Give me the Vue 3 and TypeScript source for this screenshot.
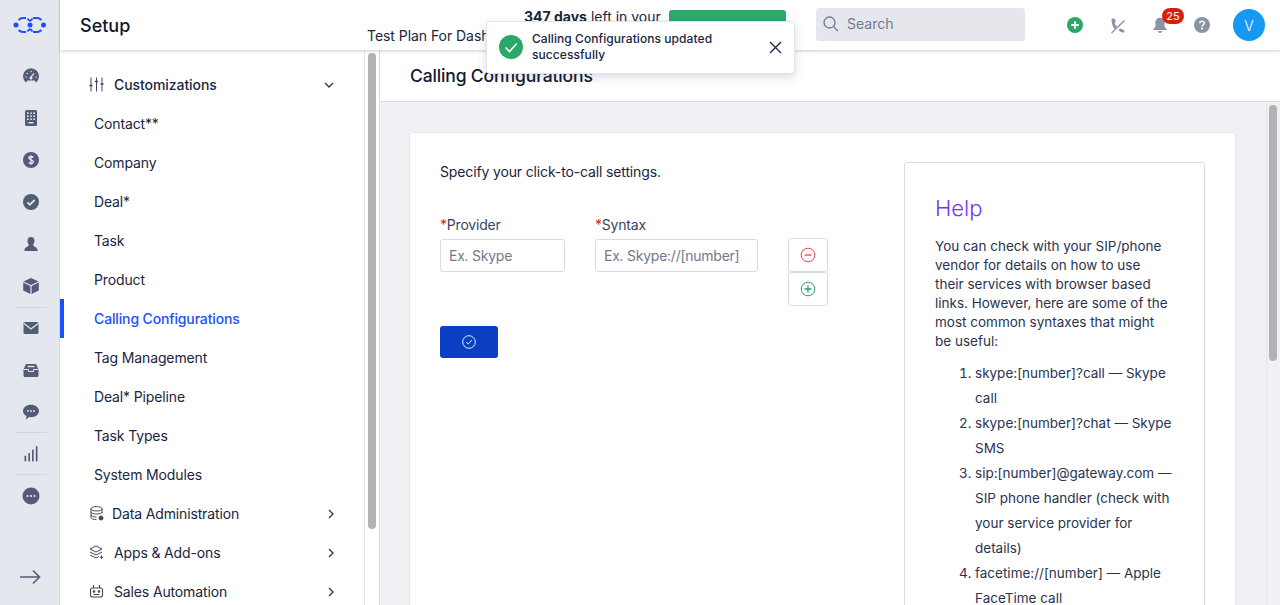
<script setup lang="ts">
const subItems: { label: string; active?: boolean }[] = [
  { label: 'Contact**' },
  { label: 'Company' },
  { label: 'Deal*' },
  { label: 'Task' },
  { label: 'Product' },
  { label: 'Calling Configurations', active: true },
  { label: 'Tag Management' },
  { label: 'Deal* Pipeline' },
  { label: 'Task Types' },
  { label: 'System Modules' },
]
const helpList: string[] = [
  'skype:[number]?call — Skype call',
  'skype:[number]?chat — Skype SMS',
  'sip:[number]@gateway.com — SIP phone handler (check with your service provider for details)',
  'facetime://[number] — Apple FaceTime call',
]
</script>

<template>
  <div class="app">
    <nav class="rail">
      <svg class="logo" width="34" height="16" viewBox="0 0 34 16" fill="none">
        <path d="M5.500 3Q7.500 1 10 1H13M20 1H24Q26.500 1 28.500 3M14.500 1.500Q16 3.800 17 3.800T19.500 1.500M5.500 13Q7.500 15 10 15H13M20 15H24Q26.500 15 28.500 13M14.500 14.500Q16 12.200 17 12.200T19.500 14.500" stroke="#1a4fff" stroke-width="1.900" />
        <circle cx="3" cy="8" r="2.500" fill="#1a4fff" />
        <circle cx="17" cy="8" r="2.500" fill="#1a4fff" />
        <circle cx="30.500" cy="8" r="2.500" fill="#1a4fff" />
      </svg>
      <div class="rail-list">
        <span class="ri"><svg width="18" height="18" viewBox="0 0 18 18"><path d="M4 15.500A8 8 0 1 1 14 15.500L12.500 13.500H5.500Z" fill="#525c76" /><path d="M8.600 10.600 12 6.400" stroke="#e5e7ee" stroke-width="1.300" /><circle cx="9" cy="11" r="1.500" fill="#e5e7ee" /><g fill="#e5e7ee"><circle cx="4" cy="10" r=".7" /><circle cx="5.200" cy="6.500" r=".7" /><circle cx="9" cy="4.500" r=".7" /><circle cx="14" cy="10" r=".7" /></g></svg></span>
        <span class="ri"><svg width="18" height="18" viewBox="0 0 18 18"><rect x="3" y="1" width="12" height="16" rx="1.500" fill="#525c76" /><g fill="#e5e7ee"><rect x="5" y="3.400" width="1.600" height="1.600" /><rect x="8.200" y="3.400" width="1.600" height="1.600" /><rect x="11.400" y="3.400" width="1.600" height="1.600" /><rect x="5" y="6.400" width="1.600" height="1.600" /><rect x="8.200" y="6.400" width="1.600" height="1.600" /><rect x="11.400" y="6.400" width="1.600" height="1.600" /><rect x="5" y="9.400" width="1.600" height="1.600" /><rect x="8.200" y="9.400" width="1.600" height="1.600" /><rect x="11.400" y="9.400" width="1.600" height="1.600" /><rect x="6.500" y="13" width="5" height="1.400" /></g></svg></span>
        <span class="ri"><svg width="18" height="18" viewBox="0 0 18 18"><circle cx="9" cy="9" r="8" fill="#525c76" /><path d="M11.200 6.600C10.800 5.800 10 5.500 9 5.500 7.800 5.500 6.900 6.100 6.900 7.100 6.900 9.300 11.300 8.400 11.300 10.800 11.300 11.900 10.300 12.500 9 12.500 7.900 12.500 7 12.100 6.700 11.200M9 4.200V13.800" stroke="#e5e7ee" stroke-width="1.300" fill="none" /></svg></span>
        <span class="ri"><svg width="18" height="18" viewBox="0 0 18 18"><circle cx="9" cy="9" r="8" fill="#525c76" /><path d="M5.300 9.300 7.900 11.700 12.700 6.800" stroke="#e5e7ee" stroke-width="1.700" fill="none" /></svg></span>
        <span class="ri"><svg width="18" height="18" viewBox="0 0 18 18"><path d="M9 2C11.300 2 12.500 3.700 12.500 5.800 12.500 7.600 11.800 9 11 10 11.200 11.500 15.500 12 15.500 15V16H2.500V15C2.500 12 6.800 11.500 7 10 6.200 9 5.500 7.600 5.500 5.800 5.500 3.700 6.700 2 9 2Z" fill="#525c76" /></svg></span>
        <span class="ri"><svg width="18" height="18" viewBox="0 0 18 18"><path d="M9 1 16.500 4.500 9 8 1.500 4.500Z" fill="#525c76" /><path d="M1.200 5.600 8.400 9V17L1.200 13.600ZM16.800 5.600 9.600 9V17L16.800 13.600Z" fill="#525c76" /></svg></span>
        <hr class="rule rule-a" />
        <span class="ri"><svg width="18" height="18" viewBox="0 0 18 18"><rect x="1.500" y="3" width="15" height="12" rx="1.500" fill="#525c76" /><path d="M2 4.500 9 10 16 4.500" stroke="#e5e7ee" stroke-width="1.200" fill="none" /></svg></span>
        <span class="ri"><svg width="18" height="18" viewBox="0 0 18 18"><path d="M4 3H14L16.500 8.500V14.500A1.500 1.500 0 0 1 15 16H3A1.500 1.500 0 0 1 1.500 14.500V8.500Z" fill="#525c76" /><path d="M2 8.500H6.500V10.500H11.500V8.500H16" stroke="#e5e7ee" stroke-width="1" fill="none" /><path d="M5.500 5.500H12.500" stroke="#e5e7ee" stroke-width="1.400" /></svg></span>
        <span class="ri"><svg width="18" height="18" viewBox="0 0 18 18"><path d="M9 1.800C4.600 1.800 1 4.500 1 8 1 10.200 2.400 12 4.600 13.100L3.600 16.500 7.400 14.100C7.900 14.200 8.500 14.200 9 14.200 13.400 14.200 17 11.500 17 8S13.400 1.800 9 1.800Z" fill="#525c76" /><g fill="#e5e7ee"><circle cx="6" cy="8" r=".9" /><circle cx="9" cy="8" r=".9" /><circle cx="12" cy="8" r=".9" /></g></svg></span>
        <hr class="rule rule-b" />
        <span class="ri"><svg width="18" height="18" viewBox="0 0 18 18" fill="#525c76"><rect x="2.500" y="10.500" width="1.700" height="6" rx=".8" /><rect x="6.300" y="8" width="1.700" height="8.500" rx=".8" /><rect x="10" y="4.500" width="1.700" height="12" rx=".8" /><rect x="13.800" y="1" width="1.700" height="15.500" rx=".8" /></svg></span>
        <hr class="rule rule-b" />
        <span class="ri"><svg width="18" height="18" viewBox="0 0 18 18"><circle cx="9" cy="9" r="8.500" fill="#525c76" /><g fill="#e5e7ee"><circle cx="5.500" cy="9" r="1.100" /><circle cx="9" cy="9" r="1.100" /><circle cx="12.500" cy="9" r="1.100" /></g></svg></span>
      </div>
      <svg class="expand" width="22" height="16" viewBox="0 0 22 16" fill="none"><path d="M1 8H20M14 1.500 20.500 8 14 14.500" stroke="#525c76" stroke-width="1.600" /></svg>
    </nav>

    <div class="shell">
      <header class="top">
        <h1 class="setup">Setup</h1>
        <div class="plan">
          <div class="plan-line">
            <span class="plan-days"><b>347 days</b> left in your</span>
            <span class="plan-btn"></span>
          </div>
          <div class="plan-name">Test Plan For Dash</div>
        </div>
        <div class="search">
          <svg width="16" height="16" viewBox="0 0 16 16" fill="none"><circle cx="6.500" cy="6.500" r="5.500" stroke="#6f7a90" stroke-width="1.300" /><path d="M10.500 10.500 15 15" stroke="#6f7a90" stroke-width="1.300" /></svg>
          <span>Search</span>
        </div>
        <div class="actions">
          <svg class="act-add" width="16" height="16" viewBox="0 0 16 16"><circle cx="8" cy="8" r="8" fill="#2aa866" /><path d="M8 4.200V11.800M4.200 8H11.800" stroke="#fff" stroke-width="1.800" /></svg>
          <svg class="act-phone" width="17" height="17" viewBox="0 0 17 17"><path d="M1.500 2.300 4 1 6 4.400 4.600 6.100C5 7.500 6 8.800 7 9.700L4.500 12C2.700 9.800 1.500 6 1.500 2.300Z" fill="#8b93a7" /><path d="M8.500 12.800 10.300 11.500 14.600 13.500 14 15.300C12.200 16.200 10 15 8.500 12.800Z" fill="#8b93a7" /><path d="M1.500 16 14.500 3.500" stroke="#8b93a7" stroke-width="1.400" /></svg>
          <span class="bell">
            <svg width="16" height="16" viewBox="0 0 16 16"><path d="M8 .8C5.200 .8 3.400 3 3.400 5.800V9.500L1 13H15L12.600 9.500V5.800C12.600 3 10.800 .8 8 .8Z" fill="#8b93a7" /><path d="M6 14A2 2 0 0 0 10 14Z" fill="#8b93a7" /></svg>
            <span class="badge">25</span>
          </span>
          <svg class="act-help" width="16" height="16" viewBox="0 0 16 16"><circle cx="8" cy="8" r="8" fill="#8b93a7" /><path d="M5.700 6.200C5.800 4.900 6.800 4.200 8 4.200 9.300 4.200 10.300 5 10.300 6.100 10.300 7.600 8.100 7.600 8.100 9.400" stroke="#fff" stroke-width="1.500" fill="none" /><circle cx="8.100" cy="11.500" r="1" fill="#fff" /></svg>
          <span class="avatar">V</span>
        </div>
      </header>

      <div class="body">
        <aside class="side">
          <div class="side-scroll">
            <div class="row head">
              <svg class="row-ic" width="15" height="15" viewBox="0 0 15 15" fill="none" stroke="#3d4760" stroke-width="1"><path d="M2 .5V14.500M7.500 .5V14.500M13 .5V14.500" /><path d="M.5 8.500H3.500M6 4.500H9M11.500 7H14.500" stroke-width="1.400" /></svg>
              <span class="head-label">Customizations</span>
              <svg class="chev" width="10" height="6" viewBox="0 0 10 6" fill="none"><path d="M1 1 5 5 9 1" stroke="#2a3450" stroke-width="1.300" /></svg>
            </div>
            <div v-for="item in subItems" :key="item.label" class="row sub" :class="{ active: item.active }">{{ item.label }}</div>
            <div class="row group">
              <svg class="row-ic ic-data" width="14" height="15" viewBox="0 0 14 15" fill="none" stroke="#3d4760" stroke-width="1"><ellipse cx="6.500" cy="2.800" rx="5.500" ry="2.200" /><path d="M1 2.800V11.500C1 12.700 3.500 13.500 6.500 13.500M12 2.800V7M1 6C1 7.200 3.500 8 6.500 8S12 7.200 12 6M1 9C1 10 3.500 11 6.500 11" /><circle cx="11" cy="12" r="2" fill="#3d4760" /></svg>
              <span class="g1">Data Administration</span>
              <svg class="chev2" width="6" height="10" viewBox="0 0 6 10" fill="none"><path d="M1 1 5 5 1 9" stroke="#2a3450" stroke-width="1.300" /></svg>
            </div>
            <div class="row group">
              <svg class="row-ic" width="15" height="15" viewBox="0 0 15 15" fill="none" stroke="#3d4760" stroke-width="1"><path d="M7 1 13 4 7 7 1 4ZM1 7 7 10 13 7M1 10 7 13 10 11.500" /><path d="M12.500 10.500V14M10.800 12.300H14.300" /></svg>
              <span class="g2">Apps &amp; Add-ons</span>
              <svg class="chev2" width="6" height="10" viewBox="0 0 6 10" fill="none"><path d="M1 1 5 5 1 9" stroke="#2a3450" stroke-width="1.300" /></svg>
            </div>
            <div class="row group">
              <svg class="row-ic" width="15" height="15" viewBox="0 0 15 15" fill="none" stroke="#3d4760" stroke-width="1.100"><rect x="1.500" y="4" width="12" height="9" rx="2" /><path d="M4.500 1V4M10.500 1V4M4.500 10.500H10.500" /><circle cx="5" cy="7.500" r=".8" fill="#3d4760" /><circle cx="10" cy="7.500" r=".8" fill="#3d4760" /></svg>
              <span class="g2">Sales Automation</span>
              <svg class="chev2" width="6" height="10" viewBox="0 0 6 10" fill="none"><path d="M1 1 5 5 1 9" stroke="#2a3450" stroke-width="1.300" /></svg>
            </div>
          </div>
          <div class="track"><span class="thumb side-thumb"></span></div>
        </aside>

        <main class="main">
          <div class="title-bar">Calling Configurations</div>
          <div class="content">
            <div class="content-scroll">
              <section class="card">
                <div class="form">
                  <p class="intro">Specify your click-to-call settings.</p>
                  <div class="fields">
                    <label class="field f-provider">
                      <span class="lab"><i>*</i>Provider</span>
                      <span class="input">Ex. Skype</span>
                    </label>
                    <label class="field f-syntax">
                      <span class="lab"><i>*</i>Syntax</span>
                      <span class="input">Ex. Skype://[number]</span>
                    </label>
                    <div class="row-btns">
                      <span class="mini"><svg width="16" height="16" viewBox="0 0 16 16" fill="none" stroke="#e9424f" stroke-width="1"><circle cx="8" cy="8" r="6.800" /><path d="M4.500 8H11.500" stroke-width="1.300" /></svg></span>
                      <span class="mini"><svg width="16" height="16" viewBox="0 0 16 16" fill="none" stroke="#2b9a66" stroke-width="1"><circle cx="8" cy="8" r="6.800" /><path d="M4.500 8H11.500M8 4.500V11.500" stroke-width="1.300" /></svg></span>
                    </div>
                  </div>
                  <div class="submit"><svg width="14" height="14" viewBox="0 0 14 14" fill="none" stroke="#fff" stroke-width=".9"><circle cx="7" cy="7" r="6.300" /><path d="M4.200 7.200 6.200 9 9.800 5.200" /></svg></div>
                </div>
                <aside class="help">
                  <h2>Help</h2>
                  <p>You can check with your SIP/phone vendor for details on how to use their services with browser based links. However, here are some of the most common syntaxes that might be useful:</p>
                  <ol>
                    <li v-for="h in helpList" :key="h">{{ h }}</li>
                  </ol>
                </aside>
              </section>
            </div>
            <div class="track main-track"><span class="thumb main-thumb"></span></div>
          </div>
        </main>
      </div>
    </div>

    <div class="toast">
      <svg width="24" height="24" viewBox="0 0 24 24"><circle cx="12" cy="12" r="12" fill="#2aa866" /><path d="M6.500 12.500 10.500 16.500 17.800 8.500" stroke="#fff" stroke-width="1.600" fill="none" /></svg>
      <span class="toast-text">Calling Configurations updated successfully</span>
      <svg class="toast-x" width="13" height="13" viewBox="0 0 13 13" fill="none"><path d="M1 1 12 12M12 1 1 12" stroke="#1b2540" stroke-width="1.300" /></svg>
    </div>
  </div>
</template>

<style>
html, body { margin: 0; height: 100%; overflow: hidden; }
</style>

<style scoped>
* { box-sizing: border-box; }
.app {
  position: relative; display: flex; width: 1280px; height: 605px; overflow: hidden;
  font-family: Inter, "Liberation Sans", sans-serif; font-size: 14px; color: #1b2540; background: #fff;
}
.rail {
  width: 60px; flex: none; display: flex; flex-direction: column; align-items: center;
  background: #e5e7ee; border-right: 1px solid #d5d8e2; padding-top: 17px; position: relative;
}
.rail-list { display: flex; flex-direction: column; align-items: center; margin-top: 22px; margin-left: 2px; width: 32px; }
.ri { height: 42px; display: flex; align-items: center; justify-content: center; flex: none; width: 100%; }
.rule { width: 32px; height: 1px; margin: 0; border: 0; background: #d0d6e4; flex: none; }
.rule-a { margin-bottom: -1px; }
.rule-b { margin-top: -1px; }
.expand { margin-top: auto; margin-bottom: 20px; }

.shell { flex: 1; min-width: 0; display: flex; flex-direction: column; }
.top {
  height: 50px; flex: none; display: flex; align-items: flex-start; background: #fff; position: relative; z-index: 2;
  box-shadow: 0 1px 3px rgba(60, 70, 110, .28); padding-left: 20px;
}
.setup { margin: 0; font-size: 18px; line-height: 52px; font-weight: 500; color: #12192f; width: 287px; flex: none; }
.plan { width: 449px; flex: none; height: 50px; overflow: hidden; }
.plan-line { display: flex; height: 26px; padding-left: 157px; gap: 8px; padding-top: 10px; line-height: 14px; }
.plan-days { white-space: nowrap; }
.plan-btn { width: 117px; height: 30px; border-radius: 3px; background: #2fa86b; flex: none; }
.plan-name { line-height: 20px; letter-spacing: -0.05px; }
.search {
  width: 209px; height: 33px; margin-top: 8px; border-radius: 3px; background: #e5e7ec; flex: none;
  display: flex; align-items: center; gap: 8px; padding: 0 0 2px 7px; color: #6f7a90;
}
.actions { position: relative; flex: 1; height: 50px; display: flex; align-items: center; padding-left: 42px; }
.act-phone { margin-left: 27px; }
.bell { position: relative; margin-left: 25px; display: block; height: 16px; }
.bell svg { display: block; }
.badge {
  position: absolute; left: 10px; top: -9px; width: 22px; height: 16px; border-radius: 8px; background: #d5210f;
  color: #fff; font-size: 11px; line-height: 16px; text-align: center;
}
.act-help { margin-left: 26px; }
.avatar {
  width: 32px; height: 32px; border-radius: 50%; background: #1699f3; color: #fff; margin-left: 23px;
  display: flex; align-items: center; justify-content: center; font-size: 14px; font-weight: 300;
}

.body { flex: 1; min-height: 0; display: flex; }
.side { width: 320px; flex: none; display: flex; border-right: 1px solid #d9dbe3; overflow: hidden; }
.side-scroll { flex: 1; padding-top: 14.500px; min-width: 0; border-right: 1px solid #e8e9ee; letter-spacing: -0.14px; }
.row { height: 39px; display: flex; align-items: center; white-space: nowrap; position: relative; }
.sub { padding-left: 34px; }
.sub.active { color: #1a4fff; font-weight: 500; }
.sub.active::before { content: ""; position: absolute; left: 0; top: 0; bottom: 0; width: 4px; background: #1a4fff; }
.row-ic { position: absolute; left: 29px; top: 12px; }
.ic-data { left: 30px; }
.head-label { margin-left: 54px; font-weight: 500; letter-spacing: -0.07px; }
.chev { position: absolute; left: 264px; top: 17px; }
.g1 { margin-left: 52px; }
.g2 { margin-left: 54px; }
.chev2 { position: absolute; left: 268px; top: 15px; }
.track { width: 14px; flex: none; padding: 3px 3px 0; background: #fff; }
.thumb { display: block; width: 8px; border-radius: 4px; background: #b2b2b2; }
.side-thumb { height: 476px; }

.main { flex: 1; min-width: 0; display: flex; flex-direction: column; }
.title-bar {
  height: 52px; flex: none; padding: 16px 0 0 30px; font-size: 17.500px; font-weight: 500; line-height: 20px; letter-spacing: -0.15px;
  color: #12192f; background: #fff; border-bottom: 1px solid #d9dbe3;
}
.content { flex: 1; min-height: 0; display: flex; background: #f0f1f5; }
.content-scroll { flex: 1; min-width: 0; padding: 30px 30px 0 29px; overflow: hidden; }
.main-track { background: #f0f1f5; border-left: 1px solid #e6e7ec; padding-top: 3px; padding-left: 2px; }
.main-thumb { height: 256px; }
.card {
  display: flex; height: 700px; background: #fff; border: 1px solid #e6e7ec; border-radius: 4px;
  padding: 29px 30px 0 30px;
}
.form { width: 464px; flex: none; }
.intro { margin: 0; line-height: 20px; letter-spacing: -0.14px; }
.fields { display: flex; margin-top: 34px; }
.field { display: flex; flex-direction: column; }
.f-provider { width: 125px; margin-right: 30px; }
.f-syntax { width: 163px; margin-right: 30px; }
.lab { line-height: 20px; margin-bottom: 4px; margin-top: -1px; color: #3a4560; letter-spacing: -0.2px; }
.lab i { font-style: normal; color: #d5210f; }
.input {
  height: 33px; border: 1px solid #d9dbe3; border-radius: 3px; padding-left: 8px; line-height: 31px; color: #6f7a90; white-space: nowrap; letter-spacing: -0.25px;
}
.row-btns { display: flex; flex-direction: column; margin-top: 22px; }
.mini {
  width: 40px; height: 34px; border: 1px solid #d9dbe3; border-radius: 3px; display: flex; align-items: center; justify-content: center; background: #fff;
}
.submit {
  width: 58px; height: 32px; margin-top: 20px; border-radius: 3px; background: #0a3fc4; display: flex; align-items: center; justify-content: center;
}
.help {
  width: 301px; flex: none; height: 600px; border: 1px solid #d9dbe3; border-radius: 3px; padding: 30px; color: #2a3450; font-size: 13.500px;
}
.help h2 { margin: 0 0 14px; font-size: 22px; line-height: 30px; font-weight: 300; color: #6f36f5; }
.help p { margin: 0; line-height: 19px; padding-right: 5px; }
.help ol { margin: 10px 0 0; padding: 0 0 0 40px; }
.help li { line-height: 25px; }

.toast {
  position: absolute; left: 485.500px; top: 20.500px; width: 309px; height: 53px; z-index: 5; background: #fff;
  border: 1px solid #e3e5ec; border-radius: 4px; box-shadow: 0 3px 10px rgba(40, 50, 90, .18);
  display: flex; align-items: center; padding-left: 12.500px;
}
.toast svg { flex: none; }
.toast-text { width: 215px; margin-left: 9px; font-size: 12px; line-height: 16px; font-weight: 500; color: #1b2540; letter-spacing: 0.07px; }
.toast-x { margin-left: 22px; }
</style>
